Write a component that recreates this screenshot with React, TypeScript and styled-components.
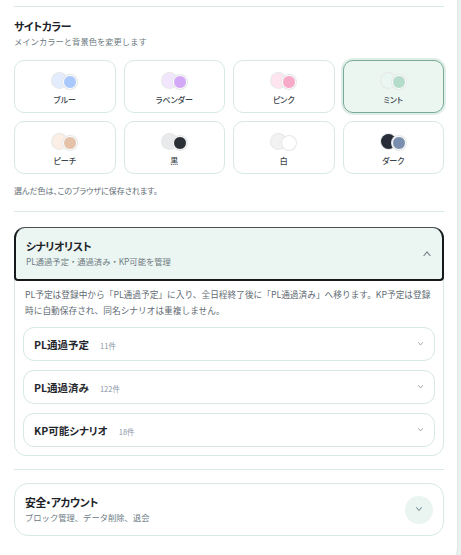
import styled, { createGlobalStyle, css } from "styled-components";

const GlobalStyle = createGlobalStyle`
  html, body {
    margin: 0;
    background: #eef4f2;
  }
  body {
    font-family: "Noto Sans CJK JP", "Noto Sans", sans-serif;
    color: #1f272d;
  }
`;

type Swatch = { name: string; base: string; accent: string };

const swatches: Swatch[] = [
  { name: "ブルー", base: "#e3ecfd", accent: "#a9c8fb" },
  { name: "ラベンダー", base: "#f1e6fd", accent: "#d3a9f7" },
  { name: "ピンク", base: "#fde4ee", accent: "#f7a9c8" },
  { name: "ミント", base: "#eaf6f1", accent: "#b5dccb" },
  { name: "ピーチ", base: "#fbeee5", accent: "#e5c1a8" },
  { name: "黒", base: "#e8eaeb", accent: "#2b2f36" },
  { name: "白", base: "#f2f2f2", accent: "#ffffff" },
  { name: "ダーク", base: "#262d38", accent: "#7a8fae" },
];

const lists = [
  { title: "PL通過予定", count: 11 },
  { title: "PL通過済み", count: 122 },
  { title: "KP可能シナリオ", count: 18 },
];

const Panel = styled.div`
  box-sizing: border-box;
  width: 462px;
  margin: -20px 0 0 -4px;
  padding: 25px 13px 13px 17px;
  background: #fff;
  border: 1px solid #dcebe6;
  border-radius: 14px;
  box-shadow: 0 2px 6px rgba(80, 120, 105, 0.08);
`;

const Divider = styled.hr`
  margin: 0;
  border: 0;
  border-top: 1px solid #d8eae4;
`;

const Section = styled.section<{ $top?: number; $bottom?: number }>`
  padding: ${(p) => p.$top ?? 13}px 0 ${(p) => p.$bottom ?? 13}px;
`;

const Title = styled.h2`
  margin: 0;
  font-size: 10.8px;
  line-height: 15px;
  font-weight: 700;
  font-feature-settings: "palt";
  letter-spacing: -0.4px;
  color: #1c2328;
`;

const Sub = styled.p`
  margin: 1px 0 0;
  font-size: 8.3px;
  line-height: 13px;
  color: #6d7a82;
`;

const ColorGrid = styled.div`
  display: grid;
  grid-template-columns: repeat(4, 1fr);
  gap: 8px;
  margin-top: 12px;
`;

const ColorCard = styled.button<{ $active?: boolean }>`
  box-sizing: border-box;
  height: 53px;
  display: flex;
  flex-direction: column;
  align-items: center;
  justify-content: center;
  gap: 7px;
  padding: 3px 0 0;
  background: #fff;
  border: 1px solid #d6e9e3;
  border-radius: 10px;
  font-family: inherit;
  cursor: pointer;
  ${(p) =>
    p.$active &&
    css`
      background: #ebf6f1;
      border: 1.5px solid #78ab95;
      box-shadow: 0 0 0 2px rgba(120, 171, 149, 0.22);
    `}
`;

const Dots = styled.span`
  display: flex;
  align-items: flex-end;
  height: 17px;
`;

const Dot = styled.span<{ $color: string; $size: number }>`
  box-sizing: border-box;
  width: ${(p) => p.$size}px;
  height: ${(p) => p.$size}px;
  border-radius: 50%;
  background: ${(p) => p.$color};
  box-shadow: 0 0 0 1px #e6e8e8;
`;

const AccentDot = styled(Dot)`
  margin-left: -4px;
  margin-bottom: -1px;
  border: 1.5px solid #fff;
`;

const ColorName = styled.span`
  font-size: 8px;
  line-height: 10px;
  font-weight: 500;
  color: #3a444b;
  font-feature-settings: "palt";
`;

const Note = styled.p`
  margin: 11px 0 0;
  font-size: 8px;
  line-height: 12px;
  color: #5f6b73;
  font-feature-settings: "palt";
`;

const Card = styled.div`
  border: 1px solid #d6e9e3;
  border-radius: 12px;
  background: #fff;
`;

const AccordionHead = styled.button`
  box-sizing: border-box;
  width: calc(100% + 2px);
  margin: -1px -1px 0;
  height: 54px;
  display: flex;
  align-items: center;
  justify-content: space-between;
  padding: 0 11px 0 10px;
  background: #ebf5f1;
  border: 2px solid #15191b;
  border-top: 1px solid #4a5054;
  border-radius: 11px 11px 4px 4px;
  text-align: left;
  font-family: inherit;
  cursor: pointer;
`;

const HeadText = styled.span`
  display: flex;
  flex-direction: column;
`;

const AccordionBody = styled.div`
  padding: 6px 8px 8px;
`;

const Desc = styled.p`
  margin: 0 0 8px 2px;
  font-size: 8.7px;
  line-height: 16px;
  color: #5f6b73;
`;

const ListStack = styled.div`
  display: flex;
  flex-direction: column;
  gap: 9px;
`;

const ListRow = styled.button`
  box-sizing: border-box;
  height: 34px;
  display: flex;
  align-items: center;
  justify-content: space-between;
  padding: 0 11px 0 10px;
  background: #fff;
  border: 1px solid #d6e9e3;
  border-radius: 11px;
  font-family: inherit;
  cursor: pointer;
`;

const RowLabel = styled.span`
  display: flex;
  align-items: baseline;
  gap: 11px;
`;

const RowTitle = styled.span`
  font-size: 10.5px;
  font-weight: 700;
  color: #1f272d;
  font-feature-settings: "palt";
`;

const Count = styled.span`
  font-size: 7.5px;
  color: #8a94a4;
`;

const RoundButton = styled.span`
  width: 28px;
  height: 28px;
  border-radius: 50%;
  background: #eaf4f1;
  display: flex;
  align-items: center;
  justify-content: center;
`;

const AccountCard = styled(Card)`
  border-radius: 14px;
  height: 53px;
  box-sizing: border-box;
  display: flex;
  align-items: center;
  justify-content: space-between;
  padding: 0 10px 0 10px;
`;

const Chevron = ({ up, size = 6, color = "#7b868d" }: { up?: boolean; size?: number; color?: string }) => (
  <svg width={size} height={size * 0.7} viewBox="0 0 10 7" fill="none">
    <polyline
      points={up ? "1,6 5,1 9,6" : "1,1 5,6 9,1"}
      stroke={color}
      strokeWidth="1.4"
      strokeLinecap="round"
      strokeLinejoin="round"
    />
  </svg>
);

export default function App() {
  return (
    <>
      <GlobalStyle />
      <Panel>
        <Divider />
        <Section $top={12} $bottom={14}>
          <Title>サイトカラー</Title>
          <Sub>メインカラーと背景色を変更します</Sub>
          <ColorGrid>
            {swatches.map((s) => (
              <ColorCard key={s.name} $active={s.name === "ミント"}>
                <Dots>
                  <Dot $color={s.base} $size={15} />
                  <AccentDot $color={s.accent} $size={14} />
                </Dots>
                <ColorName>{s.name}</ColorName>
              </ColorCard>
            ))}
          </ColorGrid>
          <Note>選んだ色は、このブラウザに保存されます。</Note>
        </Section>
        <Divider />
        <Section $top={15} $bottom={13}>
          <Card>
            <AccordionHead>
              <HeadText>
                <Title>シナリオリスト</Title>
                <Sub>PL通過予定・通過済み・KP可能を管理</Sub>
              </HeadText>
              <Chevron up size={8} />
            </AccordionHead>
            <AccordionBody>
              <Desc>
                PL予定は登録中から「PL通過予定」に入り、全日程終了後に「PL通過済み」へ移ります。KP予定は登録時に自動保存され、同名シナリオは重複しません。
              </Desc>
              <ListStack>
                {lists.map((l) => (
                  <ListRow key={l.title}>
                    <RowLabel>
                      <RowTitle>{l.title}</RowTitle>
                      <Count>{l.count}件</Count>
                    </RowLabel>
                    <Chevron size={5} />
                  </ListRow>
                ))}
              </ListStack>
            </AccordionBody>
          </Card>
        </Section>
        <Divider />
        <Section>
          <AccountCard>
            <HeadText>
              <Title>安全・アカウント</Title>
              <Sub>ブロック管理、データ削除、退会</Sub>
            </HeadText>
            <RoundButton>
              <Chevron size={6} color="#4d6a78" />
            </RoundButton>
          </AccountCard>
        </Section>
      </Panel>
    </>
  );
}
